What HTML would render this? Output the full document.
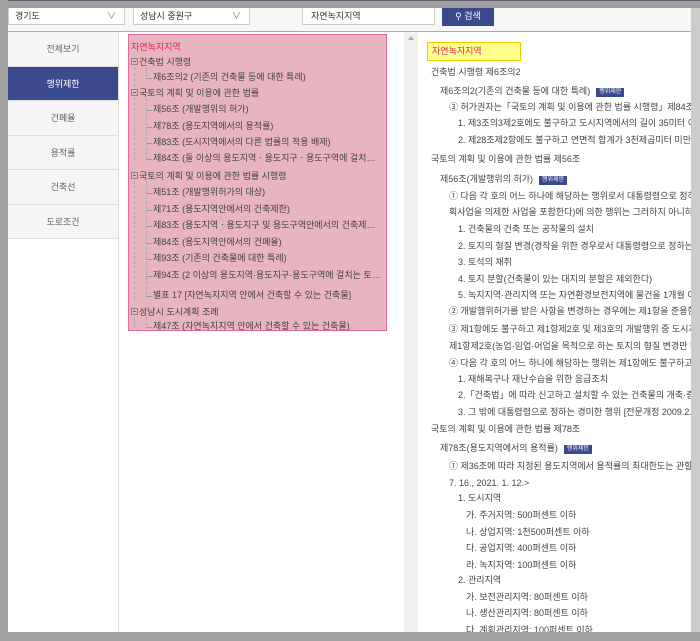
<!DOCTYPE html>
<html><head><meta charset="utf-8"><style>
*{margin:0;padding:0;box-sizing:border-box}
body{width:700px;height:641px;overflow:hidden;position:relative;background:#fff;font-family:"Liberation Sans","Noto Sans CJK KR",sans-serif;font-size:9px;color:#444}
.a{position:absolute;white-space:nowrap;line-height:12px}
#top{position:absolute;left:0;top:0;width:700px;height:32px;background:#f7f7f7;border-bottom:1px solid #aaa}
.sel{position:absolute;top:7px;height:18px;background:#fff;border:1px solid #ccc;padding-left:6px;line-height:16px;font-size:9px;color:#333}
.sel i{position:absolute;right:8px;top:0;font-style:normal;color:#777;font-size:9px}
#nav{position:absolute;left:8px;top:32px;width:111px;height:600px;background:#fff;border-right:1px solid #ddd}
.ni{height:34.5px;line-height:34px;text-align:center;background:#f5f5f5;border-bottom:1px solid #ddd;color:#666}
.ni.on{background:#3b4a8c;color:#fff}
#pink{position:absolute;left:128px;top:34px;width:259px;height:297px;background:#e8b4bf;border:1px solid #e06a9e}
.bx{display:inline-block;width:7px;height:7px;border:1px solid #888;vertical-align:0px;margin-right:1px;position:relative}
.bx:after{content:"";position:absolute;left:1px;top:2px;width:3px;height:1px;background:#666}
.vl{position:absolute;border-left:1px dashed #aaa}
.c{display:inline-block;width:6px;height:7px;border-bottom:1px solid #999;margin-right:1px;vertical-align:1px}
#sb{position:absolute;left:404px;top:32px;width:14px;height:600px;background:#f0f0f0}
.bd{display:inline-block;background:#3b4a8c;color:#fff;font-size:6px;line-height:9px;padding:0 3px;margin-left:6px;vertical-align:1px}
#ov1{position:absolute;left:0;top:0;width:700px;height:8px;background:#a0a0a0;border-top:1px solid #5a5f70}
#ov2{position:absolute;left:0;top:0;width:8px;height:641px;background:#a0a0a0}
#ov3{position:absolute;left:0;top:632px;width:700px;height:9px;background:#a0a0a0}
#ov4{position:absolute;left:691px;top:8px;width:9px;height:624px;background:#cccccc}
</style></head><body>
<div id="top">
<div class="sel" style="left:8px;width:117px">경기도<i>∨</i></div>
<div class="sel" style="left:133px;width:117px">성남시 중원구<i>∨</i></div>
<div class="sel" style="left:302px;width:133px;padding-left:8px">자연녹지지역</div>
<div style="position:absolute;left:442px;top:7px;width:52px;height:19px;background:#3b4a8c;color:#fff;line-height:19px;text-align:center;font-size:9px">&#9906; 검색</div>
</div>
<div id="nav">
<div class="ni">전체보기</div>
<div class="ni on">행위제한</div>
<div class="ni">건폐율</div>
<div class="ni">용적률</div>
<div class="ni">건축선</div>
<div class="ni">도로조건</div>
</div>
<div style="position:absolute;left:0;top:66px;width:8px;height:34px;background:#2a3360"></div>
<div id="pink"></div>
<div class="vl" style="left:134px;top:67px;height:20px"></div>
<div class="vl" style="left:134px;top:98px;height:62px"></div>
<div class="vl" style="left:134px;top:181px;height:118px"></div>
<div class="vl" style="left:134px;top:317px;height:10px"></div>
<div class="vl" style="left:146px;top:98px;height:62px"></div>
<div class="vl" style="left:146px;top:181px;height:114px"></div>
<div class="vl" style="left:146px;top:67px;height:10px"></div>
<div class="vl" style="left:146px;top:317px;height:9px"></div>
<div class="a" style="left:131px;top:41px;color:#e0245e">자연녹지지역</div>
<div class="a" style="left:131px;top:56px"><span class="bx"></span>건축법 시행령</div>
<div class="a" style="left:146px;top:71px"><span class="c"></span>제6조의2 (기존의 건축물 등에 대한 특례)</div>
<div class="a" style="left:131px;top:87px"><span class="bx"></span>국토의 계획 및 이용에 관한 법률</div>
<div class="a" style="left:146px;top:103px"><span class="c"></span>제56조 (개발행위의 허가)</div>
<div class="a" style="left:146px;top:120px"><span class="c"></span>제78조 (용도지역에서의 용적률)</div>
<div class="a" style="left:146px;top:136px"><span class="c"></span>제83조 (도시지역에서의 다른 법률의 적용 배제)</div>
<div class="a" style="left:146px;top:152px"><span class="c"></span>제84조 (둘 이상의 용도지역ㆍ용도지구ㆍ용도구역에 걸치…</div>
<div class="a" style="left:131px;top:170px"><span class="bx"></span>국토의 계획 및 이용에 관한 법률 시행령</div>
<div class="a" style="left:146px;top:186px"><span class="c"></span>제51조 (개발행위허가의 대상)</div>
<div class="a" style="left:146px;top:203px"><span class="c"></span>제71조 (용도지역안에서의 건축제한)</div>
<div class="a" style="left:146px;top:219px"><span class="c"></span>제83조 (용도지역ㆍ용도지구 및 용도구역안에서의 건축제…</div>
<div class="a" style="left:146px;top:236px"><span class="c"></span>제84조 (용도지역안에서의 건폐율)</div>
<div class="a" style="left:146px;top:252px"><span class="c"></span>제93조 (기존의 건축물에 대한 특례)</div>
<div class="a" style="left:146px;top:269px"><span class="c"></span>제94조 (2 이상의 용도지역·용도지구·용도구역에 걸치는 토…</div>
<div class="a" style="left:146px;top:289px"><span class="c"></span>별표 17 [자연녹지지역 안에서 건축할 수 있는 건축물]</div>
<div class="a" style="left:131px;top:306px"><span class="bx"></span>성남시 도시계획 조례</div>
<div class="a" style="left:146px;top:320px"><span class="c"></span>제47조 (자연녹지지역 안에서 건축할 수 있는 건축물)</div>
<div id="sb"><div style="position:absolute;left:4px;top:4px;width:0;height:0;border-left:3px solid transparent;border-right:3px solid transparent;border-bottom:4px solid #aaa"></div></div>
<div style="position:absolute;left:427px;top:42px;width:94px;height:19px;background:#ffff8c;border:1px solid #f0d000;color:#e0245e;line-height:17px;padding-left:4px">자연녹지지역</div>
<div class="a" style="left:431px;top:66px">건축법 시행령 제6조의2</div>
<div class="a" style="left:440px;top:85px">제6조의2(기존의 건축물 등에 대한 특례)<span class="bd">행위제한</span></div>
<div class="a" style="left:449px;top:101px">③ 허가권자는「국토의 계획 및 이용에 관한 법률 시행령」제84조의2</div>
<div class="a" style="left:458px;top:117px">1. 제3조의3제2호에도 불구하고 도시지역에서의 길이 35미터 이상인</div>
<div class="a" style="left:458px;top:134px">2. 제28조제2항에도 불구하고 연면적 합계가 3천제곱미터 미만인 기</div>
<div class="a" style="left:431px;top:153px">국토의 계획 및 이용에 관한 법률 제56조</div>
<div class="a" style="left:440px;top:173px">제56조(개발행위의 허가)<span class="bd">행위제한</span></div>
<div class="a" style="left:449px;top:190px">① 다음 각 호의 어느 하나에 해당하는 행위로서 대통령령으로 정하는 것</div>
<div class="a" style="left:449px;top:206px">획사업을 의제한 사업을 포함한다)에 의한 행위는 그러하지 아니하다.</div>
<div class="a" style="left:458px;top:223px">1. 건축물의 건축 또는 공작물의 설치</div>
<div class="a" style="left:458px;top:240px">2. 토지의 형질 변경(경작을 위한 경우로서 대통령령으로 정하는 토지</div>
<div class="a" style="left:458px;top:256px">3. 토석의 채취</div>
<div class="a" style="left:458px;top:273px">4. 토지 분할(건축물이 있는 대지의 분할은 제외한다)</div>
<div class="a" style="left:458px;top:289px">5. 녹지지역·관리지역 또는 자연환경보전지역에 물건을 1개월 이상</div>
<div class="a" style="left:449px;top:305px">② 개발행위허가를 받은 사항을 변경하는 경우에는 제1항을 준용한다.</div>
<div class="a" style="left:449px;top:323px">③ 제1항에도 불구하고 제1항제2호 및 제3호의 개발행위 중 도시지역과</div>
<div class="a" style="left:449px;top:340px">제1항제2호(농업·임업·어업을 목적으로 하는 토지의 형질 변경만 해당</div>
<div class="a" style="left:449px;top:357px">④ 다음 각 호의 어느 하나에 해당하는 행위는 제1항에도 불구하고 개발</div>
<div class="a" style="left:458px;top:373px">1. 재해복구나 재난수습을 위한 응급조치</div>
<div class="a" style="left:458px;top:389px">2.「건축법」에 따라 신고하고 설치할 수 있는 건축물의 개축·증축 또는</div>
<div class="a" style="left:458px;top:406px">3. 그 밖에 대통령령으로 정하는 경미한 행위 [전문개정 2009.2.6.]</div>
<div class="a" style="left:431px;top:423px">국토의 계획 및 이용에 관한 법률 제78조</div>
<div class="a" style="left:440px;top:442px">제78조(용도지역에서의 용적률)<span class="bd">행위제한</span></div>
<div class="a" style="left:449px;top:460px">① 제36조에 따라 지정된 용도지역에서 용적률의 최대한도는 관할 구역</div>
<div class="a" style="left:449px;top:477px">7. 16., 2021. 1. 12.&gt;</div>
<div class="a" style="left:458px;top:492px">1. 도시지역</div>
<div class="a" style="left:466px;top:509px">가. 주거지역: 500퍼센트 이하</div>
<div class="a" style="left:466px;top:526px">나. 상업지역: 1천500퍼센트 이하</div>
<div class="a" style="left:466px;top:542px">다. 공업지역: 400퍼센트 이하</div>
<div class="a" style="left:466px;top:559px">라. 녹지지역: 100퍼센트 이하</div>
<div class="a" style="left:458px;top:574px">2. 관리지역</div>
<div class="a" style="left:466px;top:591px">가. 보전관리지역: 80퍼센트 이하</div>
<div class="a" style="left:466px;top:607px">나. 생산관리지역: 80퍼센트 이하</div>
<div class="a" style="left:466px;top:624px">다. 계획관리지역: 100퍼센트 이하</div>
<div id="ov1"></div><div id="ov2"></div><div id="ov3"></div><div id="ov4"></div>
</body></html>
